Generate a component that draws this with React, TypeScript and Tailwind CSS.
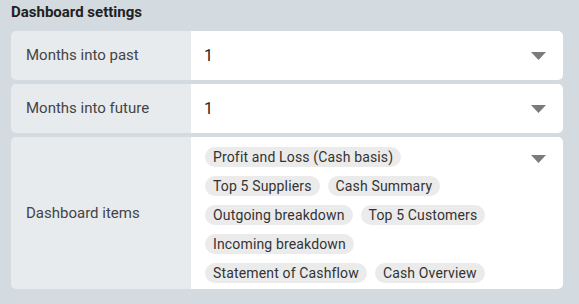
import { useState } from "react";

const items = [
  "Profit and Loss (Cash basis)",
  "Top 5 Suppliers",
  "Cash Summary",
  "Outgoing breakdown",
  "Top 5 Customers",
  "Incoming breakdown",
  "Statement of Cashflow",
  "Cash Overview",
];

function Caret() {
  return (
    <svg width="15" height="8" viewBox="0 0 15 8" className="shrink-0">
      <path d="M0 0h15l-7.5 8z" fill="#7b7b7b" />
    </svg>
  );
}

function Row({
  label,
  children,
  tall,
}: {
  label: string;
  children: React.ReactNode;
  tall?: boolean;
}) {
  return (
    <div className="flex rounded-[5px] overflow-hidden">
      <div className="w-[180px] shrink-0 bg-[#e7ebee] flex items-center pl-[15px] text-[15px] text-[#444]">
        {label}
      </div>
      <div
        className={`flex-1 bg-white ${
          tall ? "min-h-[152px]" : "h-[49px]"
        } flex`}
      >
        {children}
      </div>
    </div>
  );
}

function Select({ value }: { value: string }) {
  return (
    <div className="flex-1 flex items-center justify-between pl-[13px] pr-[17px]">
      <span className="text-[16px] text-[#222]">{value}</span>
      <Caret />
    </div>
  );
}

export default function App() {
  const [past] = useState("1");
  const [future] = useState("1");

  return (
    <div
      className="w-[579px] h-[304px] bg-[#d3dae0] pl-[11px] pr-[16px] pt-[2px]"
      style={{ fontFamily: "Roboto, 'Liberation Sans', sans-serif" }}
    >
      <h2 className="text-[15px] font-bold text-[#222] leading-[20px] mb-[9px]">
        Dashboard settings
      </h2>
      <div className="flex flex-col gap-[4px]">
        <Row label="Months into past">
          <Select value={past} />
        </Row>
        <Row label="Months into future">
          <Select value={future} />
        </Row>
        <Row label="Dashboard items" tall>
          <div className="flex-1 flex justify-between pl-[14px] pr-[17px] pt-[10px] pb-[6px]">
            <div className="w-[305px] flex flex-wrap gap-x-[8px] gap-y-[9px] content-start">
              {items.map((item) => (
                <span
                  key={item}
                  className="h-[20px] leading-[20px] px-[8px] rounded-full bg-[#ebebeb] text-[14px] tracking-[0.15px] text-[#333] whitespace-nowrap"
                >
                  {item}
                </span>
              ))}
            </div>
            <div className="pt-[8px]">
              <Caret />
            </div>
          </div>
        </Row>
      </div>
    </div>
  );
}
